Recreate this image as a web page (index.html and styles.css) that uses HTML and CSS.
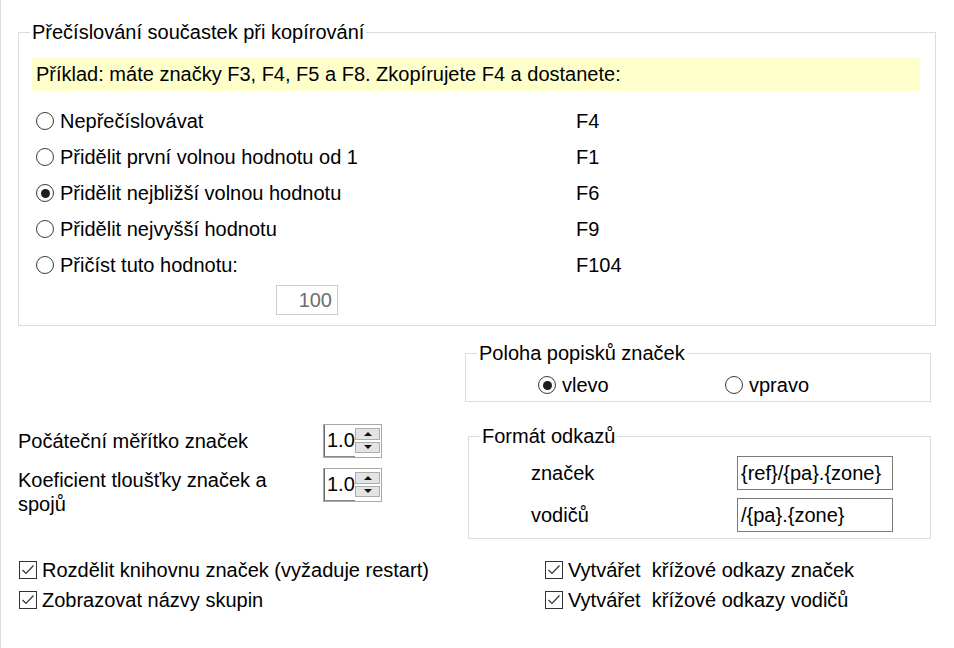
FILE: index.html
```html
<!DOCTYPE html>
<html lang="cs">
<head>
<meta charset="utf-8">
<title>Nastavení</title>
<link rel="stylesheet" href="styles.css">
</head>
<body>
<div class="page">
  <fieldset class="group g-renum">
    <legend>Přečíslování součastek při kopírování</legend>
    <div class="example">Příklad: máte značky F3, F4, F5 a F8. Zkopírujete F4 a dostanete:</div>
    <div class="options">
      <div class="opt"><span class="radio"></span><span>Nepřečíslovávat</span></div>
      <div class="res">F4</div>
      <div class="opt"><span class="radio"></span><span>Přidělit první volnou hodnotu od 1</span></div>
      <div class="res">F1</div>
      <div class="opt"><span class="radio on"></span><span>Přidělit nejbližší volnou hodnotu</span></div>
      <div class="res">F6</div>
      <div class="opt"><span class="radio"></span><span>Přidělit nejvyšší hodnotu</span></div>
      <div class="res">F9</div>
      <div class="opt"><span class="radio"></span><span>Přičíst tuto hodnotu:</span></div>
      <div class="res">F104</div>
    </div>
    <div class="addval"><div class="textbox disabled">100</div></div>
  </fieldset>

  <div class="lower">
    <div class="left">
      <div class="field">
        <span class="lbl">Počáteční měřítko značek</span>
        <div class="spin">
          <div class="spin-val">1.0</div>
          <div class="spin-btns">
            <div class="spin-btn"><span class="tri up"></span></div>
            <div class="spin-btn"><span class="tri down"></span></div>
          </div>
        </div>
      </div>
      <div class="field two">
        <span class="lbl wrap">Koeficient tloušťky značek a spojů</span>
        <div class="spin">
          <div class="spin-val">1.0</div>
          <div class="spin-btns">
            <div class="spin-btn"><span class="tri up"></span></div>
            <div class="spin-btn"><span class="tri down"></span></div>
          </div>
        </div>
      </div>
    </div>
    <div class="right">
      <fieldset class="group g-pos">
        <legend>Poloha popisků značek</legend>
        <div class="pos-row">
          <div class="opt"><span class="radio on"></span><span>vlevo</span></div>
          <div class="opt"><span class="radio"></span><span>vpravo</span></div>
        </div>
      </fieldset>
      <fieldset class="group g-fmt">
        <legend>Formát odkazů</legend>
        <div class="fmt-grid">
          <div class="fmt-lbl">značek</div>
          <div class="textbox edit">{ref}/{pa}.{zone}</div>
          <div class="fmt-lbl">vodičů</div>
          <div class="textbox edit">/{pa}.{zone}</div>
        </div>
      </fieldset>
    </div>
  </div>

  <div class="checks">
    <div class="chk"><svg class="cbox" viewBox="0 0 18 18" width="18" height="18"><rect x="0.5" y="0.5" width="17" height="17" fill="#fff" stroke="#333"/><polyline points="3.5,9 7,12.5 14.5,4.5" fill="none" stroke="#333" stroke-width="1.2"/></svg><span>Rozdělit knihovnu značek (vyžaduje restart)</span></div>
    <div class="chk"><svg class="cbox" viewBox="0 0 18 18" width="18" height="18"><rect x="0.5" y="0.5" width="17" height="17" fill="#fff" stroke="#333"/><polyline points="3.5,9 7,12.5 14.5,4.5" fill="none" stroke="#333" stroke-width="1.2"/></svg><span>Vytvářet&nbsp; křížové odkazy značek</span></div>
    <div class="chk"><svg class="cbox" viewBox="0 0 18 18" width="18" height="18"><rect x="0.5" y="0.5" width="17" height="17" fill="#fff" stroke="#333"/><polyline points="3.5,9 7,12.5 14.5,4.5" fill="none" stroke="#333" stroke-width="1.2"/></svg><span>Zobrazovat názvy skupin</span></div>
    <div class="chk"><svg class="cbox" viewBox="0 0 18 18" width="18" height="18"><rect x="0.5" y="0.5" width="17" height="17" fill="#fff" stroke="#333"/><polyline points="3.5,9 7,12.5 14.5,4.5" fill="none" stroke="#333" stroke-width="1.2"/></svg><span>Vytvářet&nbsp; křížové odkazy vodičů</span></div>
  </div>
</div>
</body>
</html>
```

FILE: styles.css
```css
html, body {
  margin: 0;
  padding: 0;
  background: #ffffff;
}

body {
  font-family: "Liberation Sans", Arial, sans-serif;
  font-size: 20px;
  color: #000;
}

.page {
  box-sizing: border-box;
  width: 954px;
  height: 648px;
  overflow: hidden;
  border-left: 1px solid #dcdcdc;
  padding: 20px 18px 0 17px;
}

/* Group boxes */
.group {
  margin: 0;
  border: 1px solid #dcdcdc;
  min-width: 0;
}

.group legend {
  padding: 0 2px;
  line-height: 24px;
  height: 24px;
}

.g-renum {
  padding: 0 15px 10px 13px;
}

.g-renum legend {
  margin-left: -2px;
}

.example {
  margin-top: 13px;
  height: 34px;
  line-height: 34px;
  padding-left: 4px;
  background: #ffffcc;
}

.options {
  margin-top: 12px;
  display: grid;
  grid-template-columns: 544px auto;
  grid-auto-rows: 36px;
  align-items: center;
}

.opt {
  display: flex;
  align-items: center;
  gap: 6px;
  line-height: 24px;
}

.options .opt {
  padding-left: 4px;
}

.radio {
  box-sizing: border-box;
  width: 18px;
  height: 18px;
  border: 1.5px solid #3a3a3a;
  border-radius: 50%;
  background: #fff;
  display: flex;
  align-items: center;
  justify-content: center;
  flex: none;
}

.radio.on::after {
  content: "";
  width: 9px;
  height: 9px;
  border-radius: 50%;
  background: #1e1e1e;
}

.addval {
  margin-top: 2px;
  padding-left: 244px;
}

.textbox {
  box-sizing: border-box;
  background: #fff;
  white-space: nowrap;
  overflow: hidden;
}

.textbox.disabled {
  width: 62px;
  height: 30px;
  line-height: 28px;
  border: 1px solid #cccccc;
  color: #6d6d6d;
  text-align: right;
  padding-right: 5px;
}

.textbox.edit {
  width: 156px;
  height: 34px;
  line-height: 32px;
  border: 1px solid #7a7a7a;
  padding-left: 3px;
}

/* Lower part */
.lower {
  margin-top: 15px;
  display: grid;
  grid-template-columns: 447px 1fr;
  align-items: start;
}

.left {
  padding-top: 83px;
}

.field {
  display: flex;
  align-items: center;
}

.field.two {
  margin-top: 10px;
  align-items: flex-start;
}

.lbl {
  width: 305px;
  flex: none;
  line-height: 24px;
}

.lbl.wrap {
  width: 265px;
  margin-right: 40px;
  line-height: 23.5px;
  padding-top: 1px;
}

.spin {
  box-sizing: border-box;
  width: 59px;
  height: 34px;
  border: 1px solid #a8a8a8;
  display: flex;
  background: #fff;
}

.spin-val {
  flex: 1;
  border-left: 1px solid #6a6a6a;
  border-bottom: 1px solid #8a8a8a;
  line-height: 31px;
  padding-left: 2px;
}

.spin-btns {
  width: 25px;
  display: flex;
  flex-direction: column;
  gap: 2px;
  padding: 3px 1px 4px 0;
}

.spin-btn {
  flex: 1;
  background: #e3e3e3;
  border: 1px solid #adadad;
  display: flex;
  align-items: center;
  justify-content: center;
}

.tri {
  width: 0;
  height: 0;
  border-left: 4px solid transparent;
  border-right: 4px solid transparent;
}

.tri.up {
  border-bottom: 4px solid #111;
}

.tri.down {
  border-top: 4px solid #111;
}

.right {
  margin-right: 5px;
}

.g-pos {
  padding: 5px 0 1px 0;
}

.g-pos legend,
.g-fmt legend {
  margin-left: 11px;
}

.pos-row {
  height: 30px;
  display: grid;
  grid-template-columns: 187px auto;
  align-items: center;
  padding-left: 72px;
}

.g-fmt {
  margin-top: 22px;
  margin-left: 3px;
  padding: 8px 0 6px 0;
}

.fmt-grid {
  display: grid;
  grid-template-columns: 206px 156px;
  grid-auto-rows: 34px;
  row-gap: 8px;
  align-items: center;
  padding-left: 62px;
}

/* Check boxes */
.checks {
  margin-top: 16px;
  display: grid;
  grid-template-columns: 526px auto;
  grid-auto-rows: 30px;
  align-items: center;
}

.chk {
  display: flex;
  align-items: center;
  gap: 5px;
  padding-left: 1px;
  white-space: nowrap;
}

.cbox {
  flex: none;
  display: block;
}
```
